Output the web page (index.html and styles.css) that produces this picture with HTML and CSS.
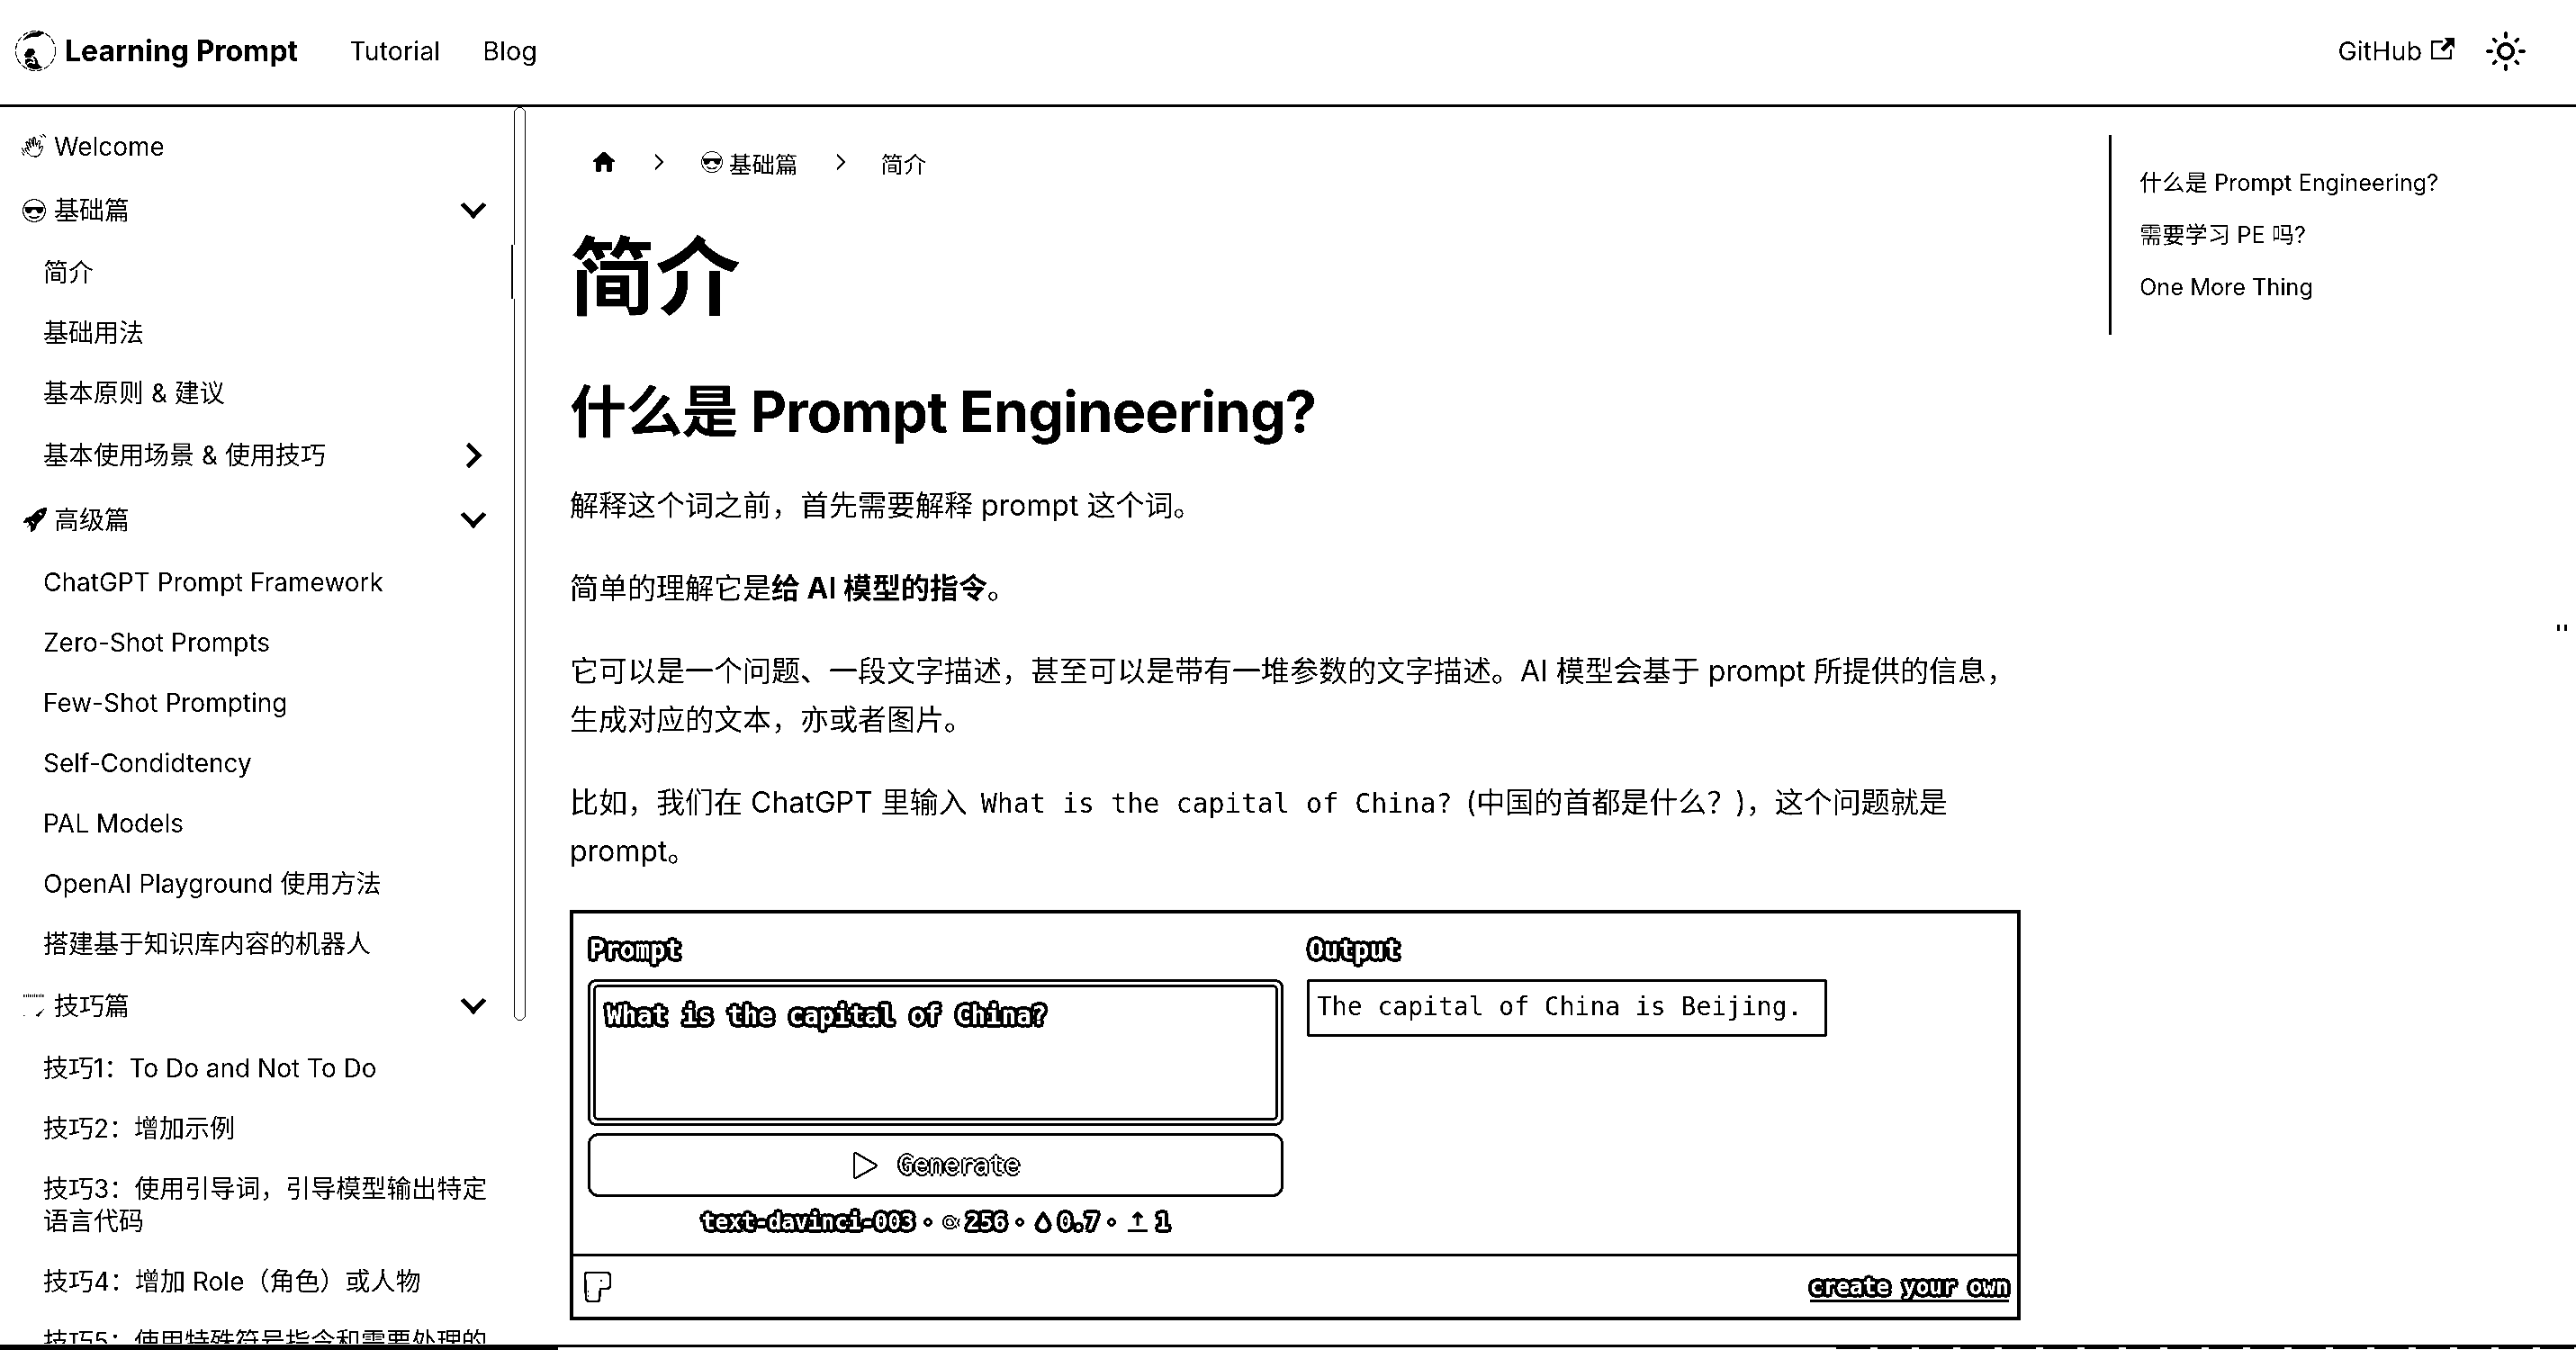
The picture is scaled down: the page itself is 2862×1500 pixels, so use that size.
FILE: index.html
```html
<!DOCTYPE html>
<html lang="zh">
<head>
    <meta charset="UTF-8">
    <title>简介 | Learning Prompt</title>
    <link rel="stylesheet" href="styles.css">
</head>
<body>
    <svg class="defs" width="0" height="0">
        <symbol id="cool" viewBox="0 0 24 24">
            <circle cx="12" cy="12" r="10.6" fill="#fff" stroke="#000" stroke-width="1"/>
            <path d="M3 8.5h18v1.5l-1 3.5c-.8 1.2-3.8 1.2-5 .2L13.5 11h-3L9 13.700c-1.200 1-4.200 1-5-.2L3 10z" fill="#000"/>
            <path d="M7 17c2.500 2.600 7.500 2.600 10 0" fill="none" stroke="#000" stroke-width="1.500"/>
        </symbol>
        <symbol id="chev-down" viewBox="0 0 30 19">
            <path d="M2.500 2.500 15 15.500 27.500 2.500" fill="none" stroke="#000" stroke-width="5"/>
        </symbol>
    </svg>

    <!--Top navigation bar-->
    <nav class="navbar">
        <a class="brand">
            <svg class="logo" viewBox="0 0 48 48">
                <circle cx="24" cy="24" r="22.500" fill="#fff" stroke="#000" stroke-width="1.200" stroke-dasharray="7 2"/>
                <path d="M9 13C14 3 28 0 35 4 29 5 29 9 24 8 19 8 15 10 9 13z" fill="#000"/>
                <path d="M14 24c1-4 8-4 9 0 1 3-1 5-3 5 4 2 8 6 7 10l5 4c-6 3-13 2-17-1-3-4-4-7-2-10-2-2-2-6 1-8z" fill="#000"/>
                <path d="M11 34c4-3 8-3 12 1M14 39c3-3 6-3 9 0M20 30l3 8" fill="none" stroke="#fff" stroke-width="1.500"/>
            </svg>
            <b>Learning Prompt</b>
        </a>
        <a class="nav-link">Tutorial</a>
        <a class="nav-link">Blog</a>
        <a class="nav-link github">GitHub
            <svg class="ext" viewBox="0 0 24 24"><path d="M21 13v10h-21v-19h12v2h-10v15h17v-8h2zm3-12h-10.988l4.035 4-6.977 7.070 2.828 2.828 6.977-7.070 4.125 4.172v-11z"/></svg>
        </a>
        <svg class="sun" viewBox="0 0 24 24"><path d="M12,9c1.650,0,3,1.350,3,3s-1.350,3-3,3s-3-1.350-3-3S10.350,9,12,9 M12,7c-2.760,0-5,2.240-5,5s2.240,5,5,5s5-2.240,5-5 S14.760,7,12,7L12,7z M2,13l2,0c0.550,0,1-0.450,1-1s-0.450-1-1-1l-2,0c-0.550,0-1,0.450-1,1S1.450,13,2,13z M20,13l2,0c0.550,0,1-0.450,1-1 s-0.450-1-1-1l-2,0c-0.550,0-1,0.450-1,1S19.450,13,20,13z M11,2v2c0,0.550,0.450,1,1,1s1-0.450,1-1V2c0-0.550-0.450-1-1-1S11,1.450,11,2z M11,20v2c0,0.550,0.450,1,1,1s1-0.450,1-1v-2c0-0.550-0.450-1-1-1C11.450,19,11,19.450,11,20z M5.990,4.580c-0.390-0.390-1.030-0.390-1.410,0 c-0.390,0.390-0.390,1.030,0,1.410l1.060,1.060c0.390,0.390,1.030,0.390,1.410,0s0.390-1.030,0-1.410L5.990,4.580z M18.360,16.950 c-0.390-0.390-1.030-0.390-1.410,0c-0.390,0.390-0.390,1.030,0,1.410l1.060,1.060c0.390,0.390,1.030,0.390,1.410,0c0.390-0.390,0.390-1.030,0-1.410 L18.360,16.950z M19.420,5.990c0.390-0.390,0.390-1.030,0-1.410c-0.390-0.390-1.030-0.390-1.410,0l-1.060,1.060c-0.390,0.390-0.390,1.030,0,1.410 s1.030,0.390,1.410,0L19.420,5.990z M7.050,18.360c0.390-0.390,0.390-1.030,0-1.410c-0.390-0.390-1.030-0.390-1.410,0l-1.060,1.060 c-0.390,0.390-0.390,1.030,0,1.410s1.030,0.390,1.410,0L7.050,18.360z"/></svg>
    </nav>

    <div class="page">
        <!--Docs sidebar-->
        <aside class="sidebar">
            <ul class="menu">
                <li class="cat">
                    <svg class="emoji" viewBox="0 0 24 24" fill="none" stroke="#000" stroke-width="1"><path d="M9 21c-3-2-5-5-6-7l1.500-1 3 3-3.500-8 1.500-.8 3.500 6-2-8.200 1.600-.5 2.900 7.500-.5-8.500 1.700-.2 1.300 8 2-5 1.500.5-1 7c1-1 2-2 3-2.500l.8 1c-1 3-2 6-4 8-1.500 1.500-3.500 1.500-5.300.5z"/><path d="M0 13l3 5M0 17l3 4M17 1l3 2M20 0l3 3"/></svg>
                    <span>Welcome</span>
                </li>
                <li class="cat">
                    <svg class="emoji"><use href="#cool"/></svg>
                    <span>基础篇</span>
                    <svg class="chev"><use href="#chev-down"/></svg>
                </li>
                <li class="item">简介</li>
                <li class="item">基础用法</li>
                <li class="item">基本原则 &amp; 建议</li>
                <li class="item sub">基本使用场景 &amp; 使用技巧
                    <svg class="chev right" viewBox="0 0 19 30"><path d="M2.500 2.500 15.500 15 2.500 27.500" fill="none" stroke="#000" stroke-width="5"/></svg>
                </li>
                <li class="cat">
                    <svg class="emoji" viewBox="0 0 24 24"><path d="M24 0c-6 0-10 3-14 8L4 10 1 15l5-1 1 2-3 4 4-3 1 2-1 5 5-3 2-6c5-3 9-9 9-15z" fill="#000"/><path d="M17 5l2 2M10 13l2 2M2 22l3-3" stroke="#fff" stroke-width="1.500"/></svg>
                    <span>高级篇</span>
                    <svg class="chev"><use href="#chev-down"/></svg>
                </li>
                <li class="item">ChatGPT Prompt Framework</li>
                <li class="item">Zero-Shot Prompts</li>
                <li class="item">Few-Shot Prompting</li>
                <li class="item">Self-Condidtency</li>
                <li class="item">PAL Models</li>
                <li class="item">OpenAI Playground 使用方法</li>
                <li class="item">搭建基于知识库内容的机器人</li>
                <li class="cat">
                    <svg class="emoji" viewBox="0 0 24 24"><path d="M2 2h20" stroke="#000" stroke-width="3" stroke-dasharray="1 1" fill="none"/><path d="M13 21l9-7-6 8z" fill="#000"/><path d="M2 21h1" stroke="#000"/></svg>
                    <span>技巧篇</span>
                    <svg class="chev"><use href="#chev-down"/></svg>
                </li>
                <li class="item">技巧1：To Do and Not To Do</li>
                <li class="item">技巧2：增加示例</li>
                <li class="item">技巧3：使用引导词，引导模型输出特定语言代码</li>
                <li class="item">技巧4：增加 Role（角色）或人物</li>
                <li class="item">技巧5：使用特殊符号指令和需要处理的文本分开</li>
            </ul>
            <!--scrollbar and the active item's edge sit over the list-->
            <div class="scroll-gap"></div>
            <div class="scroll-thumb"></div>
            <div class="active-edge"></div>
        </aside>

        <main class="content">
            <div class="crumbs">
                <svg class="home" viewBox="0 0 24 24"><path d="M10 19v-5h4v5c0 .55.45 1 1 1h3c.55 0 1-.45 1-1v-7h1.700c.46 0 .68-.57.33-.87L12.670 3.600c-.38-.34-.96-.34-1.340 0l-8.360 7.530c-.34.3-.13.87.33.87H5v7c0 .55.45 1 1 1h3c.55 0 1-.45 1-1z"/></svg>
                <svg class="sep first" viewBox="0 0 12 20"><path d="M2 2l8 8-8 8" fill="none" stroke="#000" stroke-width="2.500"/></svg>
                <span class="crumb"><svg class="crumb-emoji"><use href="#cool"/></svg> 基础篇</span>
                <svg class="sep" viewBox="0 0 12 20"><path d="M2 2l8 8-8 8" fill="none" stroke="#000" stroke-width="2.500"/></svg>
                <span class="crumb">简介</span>
            </div>

            <h1>简介</h1>
            <h2>什么是 Prompt Engineering?</h2>
            <p>解释这个词之前，首先需要解释 prompt 这个词。</p>
            <p>简单的理解它是<strong>给 AI 模型的指令</strong>。</p>
            <p>它可以是一个问题、一段文字描述，甚至可以是带有一堆参数的文字描述。AI 模型会基于 prompt 所提供的信息，生成对应的文本，亦或者图片。</p>
            <p>比如，我们在 ChatGPT 里输入 <code>What is the capital of China?</code> (中国的首都是什么？)，这个问题就是 prompt。</p>

            <!--Playground embed-->
            <section class="play">
                <div class="play-body">
                    <div class="play-col">
                        <div class="label halo">Prompt</div>
                        <div class="prompt-box"><div class="prompt-inner halo">What is the capital of China?</div></div>
                        <div class="gen-btn">
                            <svg class="play-icon" viewBox="0 0 30 32"><path d="M3 3.500c0-1.500 1.500-2 2.500-1L27 15c1 1 1 1.500 0 2.500L5.500 29.500c-1 1-2.500.5-2.500-1z" fill="#fff" stroke="#000" stroke-width="2.200"/></svg>
                            <span class="thin-halo">Generate</span>
                        </div>
                        <div class="meta halo">
                            <span>text-davinci-003</span><span class="dot"></span>
                            <svg class="meta-icon" viewBox="0 0 24 24"><path d="M20 7c-4 10-6 11-10 11a6 6 0 0 1 0-12c4 0 6 6 10 12" fill="none" stroke="#000" stroke-width="6"/><path d="M20 7c-4 10-6 11-10 11a6 6 0 0 1 0-12c4 0 6 6 10 12" fill="none" stroke="#fff" stroke-width="2"/></svg><span>256</span><span class="dot"></span>
                            <svg class="meta-icon" viewBox="0 0 24 24"><path d="M12 2c5 7 8 10 8 14a8 7 0 0 1-16 0c0-4 3-7 8-14z" fill="#fff" stroke="#000" stroke-width="5"/></svg><span>0.7</span><span class="dot"></span>
                            <svg class="meta-icon wide" viewBox="0 0 28 24"><path d="M14 2v14M9 7l5-5 5 5" fill="none" stroke="#000" stroke-width="3"/><path d="M3 20h22v3H3z" fill="#000"/></svg><span>1</span>
                        </div>
                    </div>
                    <div class="play-col">
                        <div class="label halo">Output</div>
                        <div class="output-box">The capital of China is Beijing.</div>
                    </div>
                </div>
                <div class="play-foot">
                    <svg class="dino" viewBox="0 0 32 36"><path d="M4 2h22c3 0 4 2 4 5v9c0 3-2 4-5 4h-6l-1 11c0 2-1 3-3 3H6c-2 0-3-2-3-4L2 5c0-2 1-3 2-3z" fill="#fff" stroke="#000" stroke-width="2.600"/><circle cx="20" cy="11" r="1.200"/><path d="M5 22l1 8" stroke="#000" stroke-dasharray="2 3"/></svg>
                    <a class="create halo">create your own</a>
                </div>
            </section>
        </main>

        <!--Table of contents-->
        <nav class="toc">
            <a>什么是 Prompt Engineering?</a>
            <a>需要学习 PE 吗?</a>
            <a>One More Thing</a>
        </nav>
    </div>

    <!--the cut off strip along the bottom and the small mark at the right edge-->
    <div class="bottom-strip"><div class="strip-dark"></div><div class="strip-noise"></div></div>
    <svg class="edge-mark" viewBox="0 0 11 20"><path d="M0 1h3M8 1h3M0 6h3v7H0zM8 6h3v7H8zM1 15h2M8 15h2M3 17v2M8 17v2"/></svg>
</body>
</html>
```

FILE: styles.css
```css
* { box-sizing: border-box; }

html, body {
    margin: 0;
    height: 1500px;
    overflow: hidden;
    background: #fff;
}
body {
    position: relative;
    color: #000;
    font-family: Inter, "Noto Sans CJK SC", sans-serif;
    font-size: 32px;
    /*Picture is pure black and white, so push everything to the two ends*/
    filter: grayscale(1) contrast(12);
}
.defs { position: absolute; }

/*Top bar*/
.navbar {
    height: 119px;
    border-bottom: 3px solid #000;
    display: flex;
    align-items: center;
    padding: 0 54px 3px 16px;
}
.brand {
    display: flex;
    align-items: center;
    gap: 9px;
    font-size: 32px;
    margin-right: 57px;
}
.brand b { font-weight: 700; white-space: nowrap; }
.logo { width: 47px; height: 47px; }
.nav-link { font-size: 28.700px; margin-right: 47px; }
.github {
    margin-left: auto;
    margin-right: 33px;
    display: flex;
    align-items: center;
    gap: 10px;
}
.ext { width: 26px; height: 26px; margin-top: -6px; }
.sun { width: 48px; height: 48px; }

/*Main row*/
.page {
    display: flex;
    height: 1381px;
}

/*Sidebar*/
.sidebar {
    position: relative;
    width: 584px;
    flex: none;
    height: 1374px;
    overflow: hidden;
}
.menu {
    list-style: none;
    margin: 0;
    padding: 8px 36px 0 24px;
    font-size: 28px;
    line-height: 36px;
}
.cat {
    display: flex;
    align-items: center;
    height: 71px;
}
.cat span { margin-left: 8px; }
.emoji { width: 28px; height: 28px; flex: none; }
.chev { width: 30px; height: 19px; margin-left: auto; margin-right: 7px; flex: none; }
.item {
    padding: 15.500px 0 15.500px 24px;
    position: relative;
}
.sub { padding: 18px 0 18px 24px; }
.chev.right {
    position: absolute;
    right: 12px;
    top: 21px;
    width: 19px;
    height: 30px;
    margin: 0;
}
.scroll-gap {
    position: absolute;
    left: 567px;
    top: 0;
    width: 21px;
    height: 12px;
    background: #fff;
}
.scroll-thumb {
    position: absolute;
    left: 571px;
    top: 0;
    width: 13px;
    height: 1015px;
    background: #fff;
    border: 1px solid #000;
    border-radius: 7px;
}
.active-edge {
    position: absolute;
    left: 568px;
    top: 153px;
    width: 2px;
    height: 60px;
    background: #000;
    box-shadow: 3px 0 0 #fff;
}

/*Article*/
.content {
    width: 1661px;
    flex: none;
    padding: 44px 0 0 49px;
}
.crumbs {
    display: flex;
    align-items: center;
    font-size: 25.500px;
    height: 34px;
    padding-left: 22px;
}
.home { width: 32px; height: 32px; }
.sep { width: 12px; height: 20px; margin: 0 39px 0 41px; }
.sep.first { margin: 0 40px 0 39px; }
.crumb { display: flex; align-items: center; gap: 6px; }
.crumb-emoji { width: 26px; height: 26px; }
h1 {
    font-size: 95px;
    line-height: 116px;
    font-weight: 700;
    margin: 54px 0 0;
}
h2 {
    font-size: 63px;
    letter-spacing: -0.850px;
    line-height: 78px;
    font-weight: 700;
    margin: 51px 0 0;
}
p {
    margin: 0 0 38.500px;
    line-height: 53.500px;
}
h2 + p { margin-top: 39px; }
strong { font-weight: 700; }
code {
    font-family: "DejaVu Sans Mono", monospace;
    font-size: 30px;
    padding: 0 6px;
}

/*Playground card*/
.play {
    width: 1612px;
    height: 456px;
    border: 4px solid #000;
    display: flex;
    flex-direction: column;
    font-family: "DejaVu Sans Mono", monospace;
    font-size: 28px;
    line-height: 34px;
}
.play-body {
    flex: 1;
    display: grid;
    grid-template-columns: 773px 1fr;
    column-gap: 26px;
    padding: 24px 16px 0;
}
.halo {
    color: #fff;
    font-weight: 700;
    text-shadow: 4px 0 #000, -4px 0 #000, 0 4px #000, 0 -4px #000,
        3px 3px #000, -3px 3px #000, 3px -3px #000, -3px -3px #000;
}
.thin-halo {
    color: #fff;
    text-shadow: 2.500px 0 #000, -2.500px 0 #000, 0 2.500px #000, 0 -2.500px #000;
}
.label { padding-left: 2px; height: 49px; }
.prompt-box {
    height: 163px;
    border: 3px solid #000;
    border-radius: 9px;
    padding: 3px;
}
.prompt-inner {
    height: 100%;
    border: 3px solid #000;
    border-radius: 6px;
    padding: 15px 12px 0;
}
.gen-btn {
    height: 71px;
    margin-top: 8px;
    border: 3.500px solid #000;
    border-radius: 12px;
    display: flex;
    align-items: center;
    justify-content: center;
    gap: 22px;
}
.play-icon { width: 30px; height: 32px; }
.meta {
    display: flex;
    align-items: center;
    justify-content: center;
    gap: 6px;
    font-size: 24.500px;
    margin-top: 11px;
    height: 34px;
}
.dot {
    width: 10px;
    height: 10px;
    margin: 0 4px;
    border: 3px solid #000;
    border-radius: 50%;
    background: #fff;
}
.meta-icon { width: 22px; height: 26px; }
.meta-icon.wide { width: 28px; }
.output-box {
    width: 578px;
    height: 64px;
    border: 3.500px solid #000;
    border-radius: 3px;
    padding: 11px 8px 0;
    white-space: nowrap;
}
.play-foot {
    height: 70px;
    border-top: 3px solid #000;
    display: flex;
    align-items: center;
    justify-content: space-between;
    padding: 0 9px 0 11px;
}
.dino { width: 32px; height: 36px; }
.create {
    font-size: 24.500px;
    border-bottom: 3px solid #000;
    line-height: 28px;
    margin-top: 4px;
}

/*Table of contents*/
.toc {
    width: 400px;
    height: 222px;
    margin-top: 31px;
    margin-left: 98px;
    border-left: 3px solid #000;
    display: flex;
    flex-direction: column;
    justify-content: center;
    gap: 22px;
    padding-left: 31px;
    font-size: 25.300px;
    line-height: 36px;
    white-space: nowrap;
}

/*Things overlaid at the window edges*/
.bottom-strip {
    position: absolute;
    left: 0;
    right: 0;
    bottom: 0;
    height: 6px;
    background: #fff;
    border-top: 3px solid #000;
    display: flex;
    justify-content: space-between;
}
.strip-dark {
    width: 620px;
    height: 3px;
    background: #000;
}
.strip-noise {
    width: 822px;
    height: 2px;
    background: repeating-linear-gradient(90deg, #000 0 38px, #fff 38px 46px);
}
.edge-mark {
    position: absolute;
    left: 2841px;
    top: 688px;
    width: 11px;
    height: 20px;
}
.edge-mark path { fill: #000; stroke: #000; stroke-width: 0.500; }
```
